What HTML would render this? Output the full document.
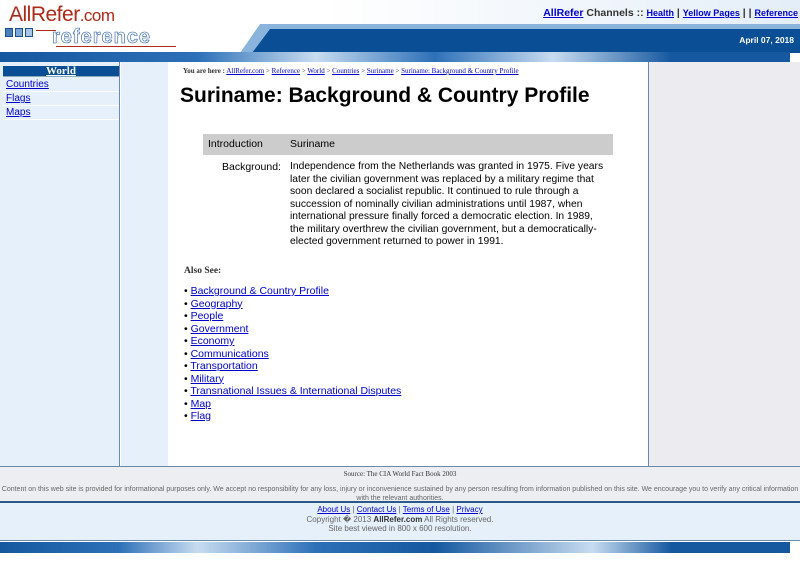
<!DOCTYPE html>
<html><head><meta charset="utf-8"><style>
*{margin:0;padding:0;box-sizing:border-box}
body{width:800px;height:563px;position:relative;background:#fff;font-family:"Liberation Sans",Arial,sans-serif;overflow:hidden}
a{color:#0000cc}
.abs{position:absolute;white-space:nowrap}
.wrap{white-space:normal}
</style></head><body>
<div class="abs" style="left:0;top:0;width:800px;height:30px;background:linear-gradient(90deg,#fff 0%,#fff 40%,#e4eef8 100%)"></div>
<div class="abs" style="left:9px;top:3px;font-size:21px;color:#b02818;letter-spacing:-0.5px">AllRefer<span style="font-size:17px">.com</span></div>
<div class="abs" style="left:5px;top:28px;width:30px;height:9px;display:flex;gap:2px"><span style="width:8px;height:9px;background:#4a7fc0;border:1px solid #1b4f90"></span><span style="width:8px;height:9px;background:#7aa6d8;border:1px solid #1b4f90"></span><span style="width:8px;height:9px;background:#a9c6e8;border:1px solid #1b4f90"></span></div>
<div class="abs" style="left:36px;top:30px;width:20px;height:1px;background:#b02818"></div>
<div class="abs" style="left:52px;top:26px;font-size:20px;font-weight:bold;letter-spacing:1px;-webkit-text-stroke:0.6px #2a5ba8;color:#fff">reference</div>
<div class="abs" style="left:56px;top:46px;width:120px;height:1px;background:#b02818"></div>
<div class="abs" style="right:2px;top:7px;font-size:10.5px;font-weight:bold;color:#333"><a href="#" style="color:#0000cc">AllRefer</a> Channels :: <a href="#" style="font-size:9px">Health</a> | <a href="#" style="font-size:9px">Yellow Pages</a> | | <a href="#" style="font-size:9px">Reference</a></div>
<svg class="abs" style="left:230px;top:23px" width="570" height="30"><polygon points="10,30 30,1 570,1 570,30" fill="#8ab4dc"/><polygon points="22,30 40,6 570,6 570,30" fill="#0a4f96"/></svg>
<div class="abs" style="right:6px;top:35px;font-size:8.5px;font-weight:bold;color:#fff">April 07, 2018</div>
<div class="abs" style="left:0;top:52px;width:790px;height:10px;background:linear-gradient(90deg,#1558a0 0%,#2d70b8 25%,#c8dcf0 40%,#2d70b8 55%,#c8dcf0 70%,#1558a0 85%)"></div>
<div class="abs" style="left:0;top:62px;width:120px;height:404px;background:#e6f0fb;border-right:1px solid #6a8aa8"></div>
<div class="abs" style="left:121px;top:62px;width:47px;height:404px;background:#e6f0fb"></div>
<div class="abs" style="left:648px;top:62px;width:152px;height:404px;background:#ececf0;border-left:1px solid #6a8aa8"></div>
<div class="abs" style="left:3px;top:66px;width:116px;height:11px;background:#0a4f96;color:#fff;font-family:'Liberation Serif',serif;font-weight:bold;font-size:11px;text-align:center;line-height:11px;border-bottom:1px solid #8ab"><u>World</u></div>
<div class="abs" style="left:3px;top:78px;width:116px;font-size:10px;line-height:13px;background:#e6f0fb">
<div style="border-bottom:1px solid #fff;padding-left:3px"><a href="#">Countries</a></div>
<div style="border-bottom:1px solid #fff;padding-left:3px"><a href="#">Flags</a></div>
<div style="border-bottom:1px solid #fff;padding-left:3px"><a href="#">Maps</a></div></div>
<div class="abs" style="left:183px;top:67px;font-family:'Liberation Serif',serif;font-size:7px;color:#333"><b>You are here :</b> <a href="#">AllRefer.com</a> &gt; <a href="#">Reference</a> &gt; <a href="#">World</a> &gt; <a href="#">Countries</a> &gt; <a href="#">Suriname</a> &gt; <a href="#">Suriname: Background &amp; Country Profile</a></div>
<div class="abs" style="left:180px;top:84px;font-size:21px;font-weight:bold;color:#000">Suriname: Background &amp; Country Profile</div>
<div class="abs" style="left:203px;top:134px;width:410px;height:21px;background:#cccccc;font-size:10.5px;line-height:21px"><span style="position:absolute;left:5px">Introduction</span><span style="position:absolute;left:87px">Suriname</span></div>
<div class="abs" style="left:222px;top:161px;font-size:10.5px">Background:</div>
<div class="abs wrap" style="left:290px;top:161px;width:316px;font-size:10.3px;line-height:12.5px">Independence from the Netherlands was granted in 1975. Five years later the civilian government was replaced by a military regime that soon declared a socialist republic. It continued to rule through a succession of nominally civilian administrations until 1987, when international pressure finally forced a democratic election. In 1989, the military overthrew the civilian government, but a democratically-elected government returned to power in 1991.</div>
<div class="abs" style="left:184px;top:266px;font-family:'Liberation Serif',serif;font-weight:bold;font-size:9.5px;color:#333">Also See:</div>
<div class="abs" style="left:184px;top:285px;font-size:10.5px;line-height:12.5px">
• <a href="#">Background &amp; Country Profile</a><br>• <a href="#">Geography</a><br>• <a href="#">People</a><br>• <a href="#">Government</a><br>• <a href="#">Economy</a><br>• <a href="#">Communications</a><br>• <a href="#">Transportation</a><br>• <a href="#">Military</a><br>• <a href="#">Transnational Issues &amp; International Disputes</a><br>• <a href="#">Map</a><br>• <a href="#">Flag</a></div>
<div class="abs" style="left:0;top:466px;width:800px;height:37px;background:#eceef2;border-top:1px solid #6a8aa8;border-bottom:2px solid #2a5a88"></div>
<div class="abs" style="left:0;top:470px;width:800px;text-align:center;font-family:'Liberation Serif',serif;font-size:7px;color:#333">Source: The CIA World Fact Book 2003</div>
<div class="abs wrap" style="left:0;top:485px;width:800px;text-align:center;font-size:7px;color:#666;line-height:9px">Content on this web site is provided for informational purposes only. We accept no responsibility for any loss, injury or inconvenience sustained by any person resulting from information published on this site. We encourage you to verify any critical information with the relevant authorities.</div>
<div class="abs" style="left:0;top:503px;width:800px;height:38px;background:#e6f0fb;border-bottom:1px solid #6a8aa8"></div>
<div class="abs" style="left:0;top:505px;width:800px;text-align:center;font-size:8px;color:#666;line-height:9.5px"><a href="#">About Us</a> | <a href="#">Contact Us</a> | <a href="#">Terms of Use</a> | <a href="#">Privacy</a><br>Copyright � 2013 <b style="color:#333">AllRefer.com</b> All Rights reserved.<br>Site best viewed in 800 x 600 resolution.</div>
<div class="abs" style="left:0;top:542px;width:790px;height:11px;background:linear-gradient(90deg,#1558a0 0%,#2d70b8 15%,#c8dcf0 25%,#2d70b8 40%,#1558a0 55%,#c8dcf0 75%,#1558a0 85%)"></div>
</body></html>
